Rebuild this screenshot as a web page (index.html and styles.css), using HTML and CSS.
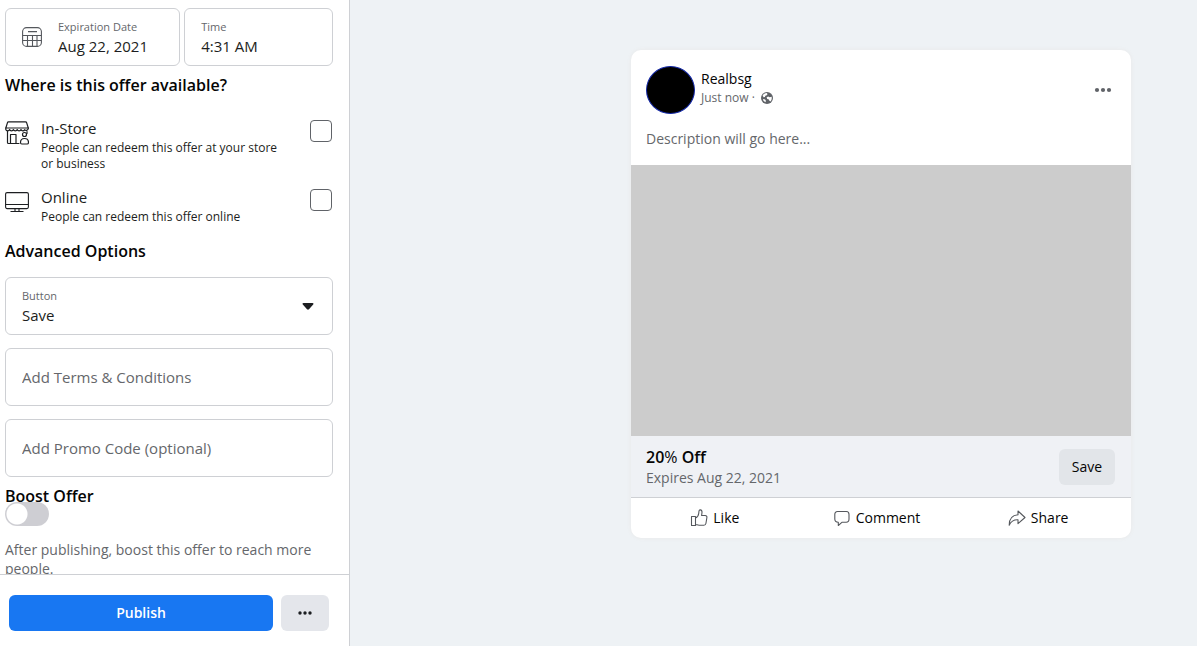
FILE: index.html
```html
<!DOCTYPE html>
<html lang="en">
<head>
<meta charset="utf-8">
<meta name="viewport" content="width=device-width, initial-scale=1">
<title>Create Offer</title>
<link rel="stylesheet" href="styles.css">
</head>
<body>
<div class="app">
  <form class="sidebar">
    <div class="settings">
      <div class="schedule">
        <div class="field field-date">
          <svg class="calendar-icon" width="20" height="20" viewBox="0 0 20 20" fill="none" stroke="#55585d" stroke-width="1.1" aria-hidden="true">
            <rect x=".6" y=".6" width="18.8" height="18.8" rx="4"/>
            <path d="M6 4.6h9M.6 8.5h18.8M.6 13.5h18.8M5.5 8.5v10.9M10.5 8.5v10.9M15 8.5v10.9"/>
          </svg>
          <div class="field-text">
            <label for="date">Expiration Date</label>
            <input id="date" type="text" value="Aug 22, 2021">
          </div>
        </div>
        <div class="field field-time">
          <div class="field-text">
            <label for="time">Time</label>
            <input id="time" type="text" value="4:31 AM">
          </div>
        </div>
      </div>

      <h2 class="heading">Where is this offer available?</h2>
      <div class="places">
        <div class="place">
          <svg class="place-icon" width="24" height="24" viewBox="0 0 24 24" fill="none" stroke="#1c1e21" stroke-width="1.2" stroke-linejoin="round" stroke-linecap="round" aria-hidden="true">
            <path d="M3.5.8h17c.6 0 1 .3 1.100.8L23.300 7H.8l1.700-5.400c.1-.5.5-.8 1-.8z"/>
            <path d="M.8 7v1.500c.5 1.800 3.200 1.800 3.800 0 .6 1.800 3.200 1.800 3.800 0 .6 1.800 3.200 1.800 3.800 0 .6 1.800 3.200 1.800 3.800 0 .6 1.800 3 1.800 3.600.2 1 1.300 3.300.8 3.700-1V7"/>
            <path d="M2.500 10v11.500c0 .6.300 1 1 1h10.500M5.500 22.500v-9H11v9M22 10.500v2"/>
            <circle cx="19.500" cy="13.500" r="2"/>
            <path d="M15.500 21.500c0-2.500 1.800-4 4-4s4 1.500 4 4c0 1-.5 1.500-1.300 1.500h-5.400c-.8 0-1.300-.5-1.300-1.500z"/>
          </svg>
          <div class="place-text">
            <label class="place-name" for="in-store">In-Store</label>
            <p class="place-note">People can redeem this offer at your store or business</p>
          </div>
          <input class="tick" id="in-store" type="checkbox">
        </div>
        <div class="place">
          <svg class="place-icon" width="24" height="24" viewBox="0 0 24 24" fill="none" stroke="#1c1e21" stroke-width="1.1" aria-hidden="true">
            <rect x=".6" y="2.600" width="22.800" height="16" rx="1.500"/>
            <path d="M.6 14.500h22.800M10 18.600v3M14 18.600v3M5.500 21.500h13"/>
          </svg>
          <div class="place-text">
            <label class="place-name" for="online">Online</label>
            <p class="place-note">People can redeem this offer online</p>
          </div>
          <input class="tick" id="online" type="checkbox">
        </div>
      </div>

      <h2 class="heading">Advanced Options</h2>
      <div class="options">
        <div class="field field-select">
          <div class="field-text">
            <label for="button-kind">Button</label>
            <select id="button-kind"><option>Save</option></select>
          </div>
          <svg class="caret" width="12" height="7" viewBox="0 0 12 7" aria-hidden="true"><path d="M1.500 0h9c1 0 1.300 1 .7 1.600L7 6.200c-.6.600-1.400.6-2 0L.8 1.600C.2 1 .5 0 1.500 0z" fill="#1c1e21"/></svg>
        </div>
        <input class="field field-plain" type="text" placeholder="Add Terms &amp; Conditions" aria-label="Terms and conditions">
        <input class="field field-plain" type="text" placeholder="Add Promo Code (optional)" aria-label="Promo code">
      </div>

      <label class="heading heading-boost" for="boost">Boost Offer</label>
      <input class="switch" id="boost" type="checkbox" role="switch">
      <p class="boost-note">After publishing, boost this offer to reach more people.</p>
    </div>
    <div class="footer">
      <button class="publish" type="button">Publish</button>
      <button class="more" type="button" aria-label="More options">
        <svg width="14" height="4" viewBox="0 0 14 4" fill="#1c1e21" aria-hidden="true"><circle cx="2" cy="2" r="1.700"/><circle cx="7" cy="2" r="1.700"/><circle cx="12" cy="2" r="1.700"/></svg>
      </button>
    </div>
  </form>

  <main class="preview">
    <article class="post">
      <header class="post-head">
        <div class="avatar"></div>
        <div class="author">
          <a class="author-name" href="#">Realbsg</a>
          <div class="posted">
            <span>Just now ·</span>
            <svg width="12" height="12" viewBox="0 0 12 12" aria-hidden="true"><circle cx="6" cy="6" r="6" fill="#606368"/><path d="M1.600 3.500C2.500 2 4 1.200 5.700 1.100L6.600 2 5.800 3.200 4.300 3.700 3.900 5 2.600 5.200zM5.600 5.200l1.600-.7 1.500.7 1.900-.4c.5 1.800 0 3.500-1.200 4.700L8.200 8.600 7.900 7.400 6.200 7zM2.300 7l1.800.5.8 1.300-.4 1.500C3.400 9.800 2.500 9 2 8z" fill="#fff"/></svg>
          </div>
        </div>
        <button class="post-menu" type="button" aria-label="Post menu">
          <svg width="18" height="6" viewBox="0 0 18 6" fill="#606368" aria-hidden="true"><circle cx="3" cy="3" r="2.100"/><circle cx="9" cy="3" r="2.100"/><circle cx="15" cy="3" r="2.100"/></svg>
        </button>
      </header>
      <p class="description">Description will go here...</p>
      <div class="photo"></div>
      <div class="offer">
        <div class="offer-text">
          <h3 class="offer-title">20<span class="percent">%</span> Off</h3>
          <p class="offer-expiry">Expires Aug 22, 2021</p>
        </div>
        <button class="save" type="button">Save</button>
      </div>
      <div class="actions">
        <button class="action" type="button">
          <svg width="18" height="18" viewBox="0 0 18 18" fill="none" stroke="#55585d" stroke-width="1.100" stroke-linejoin="round" aria-hidden="true"><path d="M1.500 7.500h4v9h-4zM5.500 9c2-.8 3-2.500 3.200-4.500L9 2c.1-.7.600-1.200 1.300-1.100 1.200.2 1.800 1.400 1.700 2.600l-.4 3h3.600c1.200 0 1.900.9 1.700 2l-1 6c-.2 1.100-1 1.700-2 1.700H9c-1.500 0-2.300-.7-3.500-.7"/></svg>
          Like
        </button>
        <button class="action" type="button">
          <svg width="18" height="18" viewBox="0 0 18 18" fill="none" stroke="#55585d" stroke-width="1.100" stroke-linejoin="round" aria-hidden="true"><path d="M4.500 2.500h9C15.300 2.500 16 3.800 16 5.500V10c0 2-1 3.200-2.800 3.200H9.200L5.300 16.500v-3.300c-2.500 0-3.500-1.200-3.500-3.200V5.500c0-1.800.900-3 2.700-3z"/></svg>
          Comment
        </button>
        <button class="action" type="button">
          <svg width="18" height="18" viewBox="0 0 18 18" fill="none" stroke="#55585d" stroke-width="1.100" stroke-linejoin="round" aria-hidden="true"><path d="M10 2l7 6.500-7 6.200v-3.900c-4-.2-6.800 1.200-8.800 5.400C1.200 10 4.500 6.200 10 5.800z"/></svg>
          Share
        </button>
      </div>
    </article>
  </main>
</div>
</body>
</html>
```
FILE: styles.css
```css
* { box-sizing: border-box; }

body {
  margin: 0;
  font-family: "Open Sans", "Noto Sans", sans-serif;
  font-size: 14px;
  line-height: 20px;
  color: #1c1e21;
  background: #eef2f5;
}

h2, h3, p { margin: 0; }
button, input, select { font: inherit; color: inherit; }
button { padding: 0; border: 0; background: none; cursor: pointer; }
svg { display: block; flex: none; }

.app { display: flex; height: 100vh; }

/* Settings column */
.sidebar {
  display: flex;
  flex: none;
  flex-direction: column;
  width: 350px;
  background: #fff;
  border-right: 1px solid #ced0d4;
}
.settings {
  flex: 1;
  min-height: 0;
  overflow: hidden;
  padding: 8px 16px 0 5px;
}

.schedule { display: flex; gap: 4px; }
.field {
  display: flex;
  align-items: center;
  width: 100%;
  height: 58px;
  padding: 0 16px;
  background: #fff;
  border: 1px solid #ced0d4;
  border-radius: 6px;
}
.field-date { flex: 13; gap: 16px; padding-right: 8px; }
.field-time { flex: 10; }
.field-text { display: flex; flex: 1; flex-direction: column; min-width: 0; }
.field-text label { font-size: 11px; line-height: 18px; color: #65676b; }
.field-text input, .field-text select {
  width: 100%;
  height: 20px;
  padding: 0;
  border: 0;
  background: none;
  font-size: 15px;
  appearance: none;
}
.field-plain::placeholder { color: #65676b; opacity: 1; }
.field-plain { font-size: 15px; }
.caret { margin-right: 2px; }

.heading { font-size: 16px; font-weight: 600; line-height: 20px; color: #050505; }
.schedule + .heading { margin-top: 9px; }

.places {
  display: flex;
  flex-direction: column;
  gap: 14px;
  padding: 22px 1px 16px 0;
}
.place { display: flex; gap: 12px; }
.place-icon { margin-top: 4px; }
.place-text { flex: 1; }
.place-name { display: block; font-size: 15px; line-height: 23px; }
.place-note { max-width: 248px; font-size: 12px; line-height: 16px; }
.tick {
  flex: none;
  width: 22px;
  height: 22px;
  margin: 3px 0 0;
  appearance: none;
  border: 1px solid #606368;
  border-radius: 4px;
}

.options { display: flex; flex-direction: column; gap: 13px; margin: 16px 0 9px; }

.heading-boost { position: relative; z-index: 1; display: block; }
.switch {
  display: block;
  width: 44px;
  height: 24px;
  margin: -4px 0 14px;
  appearance: none;
  border-radius: 12px;
  background: radial-gradient(circle at 12px 12px, #fff 10px, #ceced3 11px);
}
.boost-note { line-height: 19px; color: #65676b; }

.footer {
  display: flex;
  gap: 8px;
  padding: 20px 20px 15px 9px;
  border-top: 1px solid #ced0d4;
}
.publish {
  flex: 1;
  height: 36px;
  border-radius: 6px;
  background: #1877f2;
  color: #fff;
  font-weight: 600;
}
.more {
  display: flex;
  align-items: center;
  justify-content: center;
  width: 48px;
  border-radius: 6px;
  background: #e4e6eb;
}

/* Post preview */
.preview {
  display: flex;
  flex: 1;
  align-items: flex-start;
  justify-content: flex-end;
  padding: 50px 66px;
}
.post {
  width: 500px;
  overflow: hidden;
  border-radius: 10px;
  background: #fff;
  box-shadow: 0 0 4px #e8e8e8;
}
.post-head { display: flex; gap: 6px; padding: 16px 16px 0 15px; }
.avatar {
  width: 49px;
  height: 48px;
  border: 1px solid #1428a8;
  border-radius: 50%;
  background: #000;
}
.author { flex: 1; padding-top: 3px; }
.author-name { display: block; color: #050505; font-weight: 500; text-decoration: none; }
.posted {
  display: flex;
  align-items: center;
  gap: 6px;
  font-size: 12px;
  line-height: 18px;
  color: #65676b;
}
.post-menu { display: flex; align-items: center; padding-left: 8px; }
.post-menu svg { margin-right: 3px; }
.description { padding: 15px 15px 16px; color: #65676b; }
.photo { height: 271px; background: #ccc; }
.offer {
  display: flex;
  align-items: center;
  justify-content: space-between;
  padding: 10px 16px 10px 15px;
  background: #eff1f5;
  border-bottom: 1px solid #ced0d4;
}
.offer-title { font-size: 16px; font-weight: 600; line-height: 22px; color: #050505; }
.percent { font-weight: 400; }
.offer-expiry { line-height: 19px; color: #65676b; }
.save {
  width: 56px;
  height: 36px;
  border-radius: 6px;
  background: #e2e5e9;
  color: #050505;
  font-weight: 500;
}
.actions { display: flex; padding: 0 12px 0 3px; }
.action {
  display: flex;
  flex: 1;
  align-items: center;
  justify-content: center;
  gap: 5px;
  height: 40px;
  color: #050505;
  font-weight: 500;
}
```
